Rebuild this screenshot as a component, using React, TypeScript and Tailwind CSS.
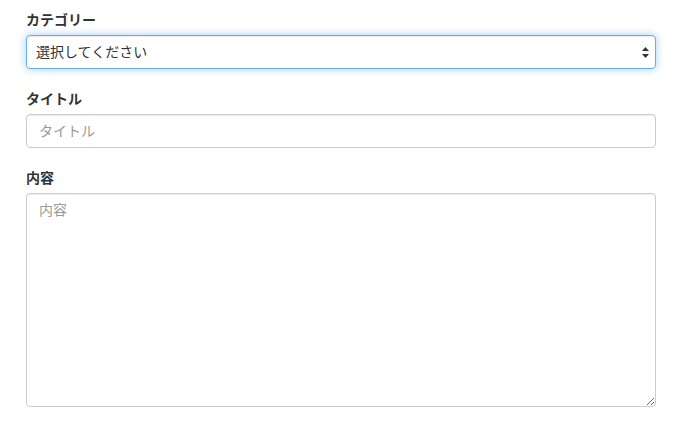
import React from 'react'

const FONT = "font-['Helvetica_Neue','Liberation_Sans','Noto_Sans_CJK_JP',sans-serif]"
const BASE =
  'block w-full rounded-[4px] border bg-white text-[14px] outline-none placeholder:text-[#999]'
const CONTROL = `${BASE} border-[#ccc] px-3 text-[#555] shadow-[inset_0_1px_1px_rgba(0,0,0,0.075)]`

export default function App() {
  return (
    <div className={`${FONT} min-h-screen bg-white pl-[26px] pr-[22px] pt-[10px] text-[14px] leading-[20px] text-[#333]`}>
      <form className="flex flex-col gap-5">
        {/* Category */}
        <div className="flex flex-col gap-[5px]">
          <label className="font-bold">カテゴリー</label>
          <div className="relative">
            <select
              defaultValue=""
              className={`${BASE} h-[34px] appearance-none border-[#66afe9] pl-[9px] pr-6 text-[#333] shadow-[inset_0_1px_1px_rgba(0,0,0,0.075),0_0_8px_rgba(102,175,233,0.6)]`}
            >
              <option value="">選択してください</option>
            </select>
            <svg
              className="pointer-events-none absolute right-[7px] top-[12px]"
              width="7"
              height="11"
              viewBox="0 0 7 11"
            >
              <path d="M3.5 0 L7 4 L0 4 Z" fill="#333" />
              <path d="M0 7 L7 7 L3.5 11 Z" fill="#333" />
            </svg>
          </div>
        </div>

        {/* Title */}
        <div className="flex flex-col gap-[5px]">
          <label className="font-bold">タイトル</label>
          <input type="text" placeholder="タイトル" className={`${CONTROL} h-[34px]`} />
        </div>

        {/* Content */}
        <div className="flex flex-col gap-[5px]">
          <label className="font-bold">内容</label>
          <textarea
            placeholder="内容"
            className={`${CONTROL} h-[214px] py-[6px]`}
          />
        </div>
      </form>
    </div>
  )
}
